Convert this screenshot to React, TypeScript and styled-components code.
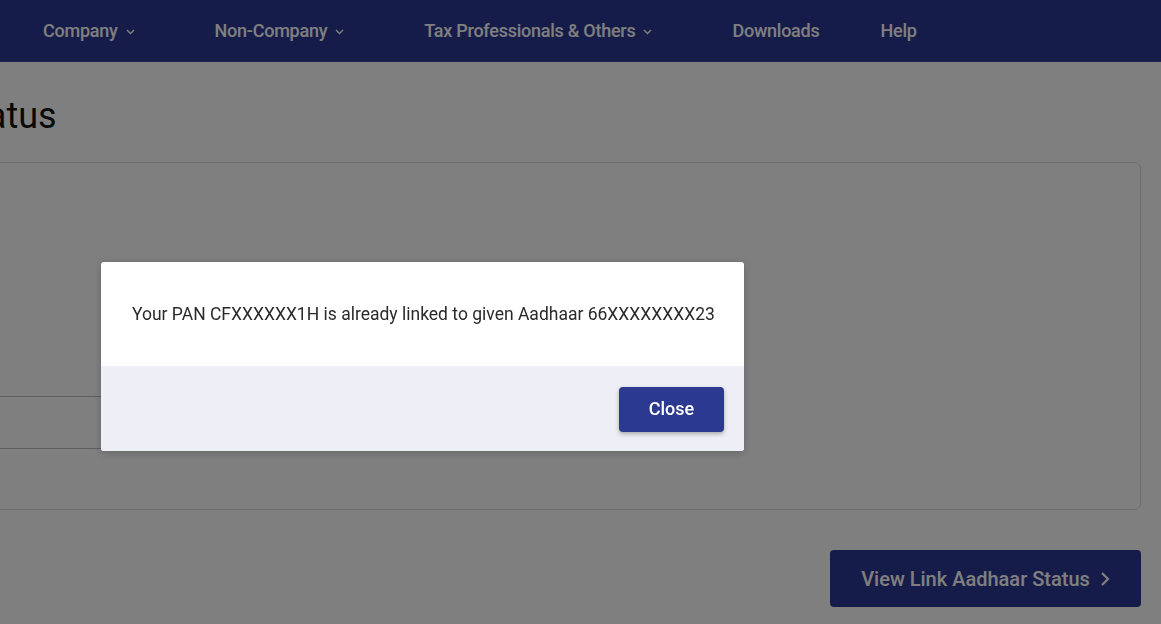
import * as React from 'react'
import styled, { createGlobalStyle } from 'styled-components'

const GlobalStyle = createGlobalStyle`
  html, body {
    margin: 0;
    padding: 0;
    background: #ffffff;
    font-family: Roboto, "Liberation Sans", Arial, sans-serif;
    overflow: hidden;
  }
  * { box-sizing: border-box; }
`

const Page = styled.div`
  width: 1161px;
  height: 624px;
  overflow: hidden;
  position: relative;
  background: #ffffff;
`

const NavBar = styled.nav`
  height: 62px;
  background: #2c3894;
  border-bottom: 1px solid #3a46a0;
  display: flex;
  align-items: center;
  padding-left: 43px;
  gap: 61px;
`

const NavItem = styled.div`
  display: flex;
  align-items: center;
  color: #ffffff;
  font-size: 18px;
  font-weight: 500;
  letter-spacing: -0.25px;
`

const NavChevron = styled.span`
  display: inline-flex;
  margin: 2px 19px 0 8px;
`

const Main = styled.main`
  margin-left: -265px;
  padding: 32px 20px 0 0;
  display: flex;
  flex-direction: column;
`

const Title = styled.h1`
  margin: 0;
  font-size: 36px;
  font-weight: 400;
  line-height: 44px;
  color: #111111;
  white-space: nowrap;
`

const Card = styled.section`
  margin-top: 24px;
  height: 348px;
  border: 1px solid #dcdcdc;
  border-radius: 6px;
  padding: 233px 24px 0 24px;
`

const InputBox = styled.div`
  width: 600px;
  height: 53px;
  border: 1px solid #bdbdbd;
  border-radius: 4px;
`

const Actions = styled.div`
  display: flex;
  justify-content: flex-end;
  margin-top: 40px;
`

const PrimaryLarge = styled.button`
  width: 311px;
  height: 57px;
  background: #2c3894;
  color: #ffffff;
  border: none;
  border-radius: 4px;
  font-family: inherit;
  font-size: 20px;
  font-weight: 500;
  display: flex;
  align-items: center;
  justify-content: center;
  gap: 10px;
  padding-top: 1px;
`

const Overlay = styled.div`
  position: fixed;
  inset: 0;
  background: rgba(0, 0, 0, 0.5);
  padding: 262px 0 0 101px;
`

const Dialog = styled.div`
  width: 643px;
  background: #ffffff;
  border-radius: 3px;
  overflow: hidden;
  box-shadow: 0 2px 8px rgba(0, 0, 0, 0.2);
`

const DialogBody = styled.div`
  height: 104px;
  padding: 40px 20px 0 31px;
  font-size: 17.5px;
  line-height: 24px;
  color: #2a2a2a;
  white-space: nowrap;
`

const DialogFooter = styled.div`
  height: 85px;
  background: #eeeff6;
  display: flex;
  justify-content: flex-end;
  padding: 21px 20px 0 0;
`

const CloseButton = styled.button`
  width: 105px;
  height: 45px;
  background: #2b3990;
  color: #ffffff;
  border: none;
  border-radius: 4px;
  font-family: inherit;
  font-size: 18px;
  font-weight: 500;
  padding-bottom: 3px;
  box-shadow: 0 2px 4px rgba(0, 0, 0, 0.3);
`

const Chevron = () => (
  <svg width="9" height="6" viewBox="0 0 9 6" fill="none">
    <path d="M1 1l3.5 3.5L8 1" stroke="currentColor" strokeWidth="1.4" />
  </svg>
)

const navItems: { label: string; menu: boolean }[] = [
  { label: 'Company', menu: true },
  { label: 'Non-Company', menu: true },
  { label: 'Tax Professionals & Others', menu: true },
  { label: 'Downloads', menu: false },
  { label: 'Help', menu: false },
]

export default function App() {
  return (
    <Page>
      <GlobalStyle />
      <NavBar>
        {navItems.map((item) => (
          <NavItem key={item.label}>
            {item.label}
            {item.menu && (
              <NavChevron>
                <Chevron />
              </NavChevron>
            )}
          </NavItem>
        ))}
      </NavBar>
      <Main>
        <Title>Link Aadhaar Status</Title>
        <Card>
          <InputBox />
        </Card>
        <Actions>
          <PrimaryLarge>
            View Link Aadhaar Status
            <svg width="10" height="16" viewBox="0 0 10 16" fill="none">
              <path d="M2 2l6 6-6 6" stroke="currentColor" strokeWidth="2.2" />
            </svg>
          </PrimaryLarge>
        </Actions>
      </Main>
      <Overlay>
        <Dialog>
          <DialogBody>
            Your PAN CFXXXXXX1H is already linked to given Aadhaar 66XXXXXXXX23
          </DialogBody>
          <DialogFooter>
            <CloseButton>Close</CloseButton>
          </DialogFooter>
        </Dialog>
      </Overlay>
    </Page>
  )
}
